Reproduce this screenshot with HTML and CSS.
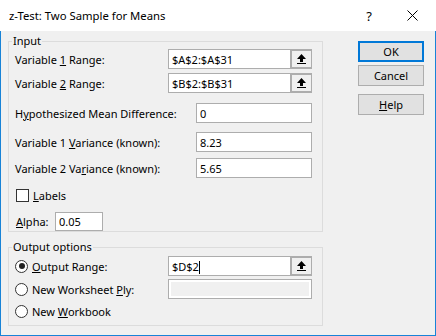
FILE: index.html
```html
<!DOCTYPE html>
<html>

<head>
    <meta content="text/html; charset=utf-8" http-equiv="Content-Type">
    <title>z-Test: Two Sample for Means</title>
    <link rel="stylesheet" href="styles.css">
</head>

<body>
<div class="window">
    <div class="titleBar">
        <span class="titleText">z-Test: Two Sample for Means</span>
        <span class="titleHelp">?</span>
        <svg class="titleClose" width="11" height="11" viewBox="0 0 11 11">
            <path d="M0.5 0.5 L10.5 10.5 M10.5 0.5 L0.5 10.5" stroke="#000" stroke-width="1" fill="none"/>
        </svg>
    </div>
    <div class="client">
        <div class="groups">
            <fieldset class="group groupInput">
                <legend>Input</legend>
                <div class="row">
                    <span class="label">Variable <u>1</u> Range:</span>
                    <div class="edit refEdit">
                        <span class="editText">$A$2:$A$31</span>
                        <span class="refButton">
                            <svg width="9" height="11" viewBox="0 0 9 11"><path d="M4.5 0 L9 5 L6 5 L6 8 L3 8 L3 5 L0 5 Z" fill="#000"/><rect x="0" y="9" width="9" height="1" fill="#000"/></svg>
                        </span>
                    </div>
                </div>
                <div class="row rowRange2">
                    <span class="label">Variable <u>2</u> Range:</span>
                    <div class="edit refEdit">
                        <span class="editText">$B$2:$B$31</span>
                        <span class="refButton">
                            <svg width="9" height="11" viewBox="0 0 9 11"><path d="M4.5 0 L9 5 L6 5 L6 8 L3 8 L3 5 L0 5 Z" fill="#000"/><rect x="0" y="9" width="9" height="1" fill="#000"/></svg>
                        </span>
                    </div>
                </div>
                <div class="row rowHyp">
                    <span class="label">H<u>y</u>pothesized Mean Difference:</span>
                    <div class="edit shortEdit"><span class="editText">0</span></div>
                </div>
                <div class="row rowVar1">
                    <span class="label">Variable 1 <u>V</u>ariance (known):</span>
                    <div class="edit shortEdit"><span class="editText">8.23</span></div>
                </div>
                <div class="row rowVar2">
                    <span class="label">Variable 2 Va<u>r</u>iance (known):</span>
                    <div class="edit shortEdit"><span class="editText">5.65</span></div>
                </div>
                <div class="row rowLabels">
                    <span class="checkBox"></span>
                    <span class="checkLabel"><u>L</u>abels</span>
                </div>
                <div class="row rowAlpha">
                    <span class="alphaLabel"><u>A</u>lpha:</span>
                    <div class="edit alphaEdit"><span class="editText">0.05</span></div>
                </div>
            </fieldset>

            <fieldset class="group groupOutput">
                <legend>Output options</legend>
                <div class="row">
                    <span class="radio checked"></span>
                    <span class="label radioLabel"><u>O</u>utput Range:</span>
                    <div class="edit refEdit">
                        <span class="editText">$D$2<span class="caret"></span></span>
                        <span class="refButton">
                            <svg width="9" height="11" viewBox="0 0 9 11"><path d="M4.5 0 L9 5 L6 5 L6 8 L3 8 L3 5 L0 5 Z" fill="#000"/><rect x="0" y="9" width="9" height="1" fill="#000"/></svg>
                        </span>
                    </div>
                </div>
                <div class="row rowPly">
                    <span class="radio"></span>
                    <span class="label radioLabel">New Worksheet <u>P</u>ly:</span>
                    <div class="edit refEdit disabledEdit"></div>
                </div>
                <div class="row rowBook">
                    <span class="radio"></span>
                    <span class="label radioLabel">New <u>W</u>orkbook</span>
                </div>
            </fieldset>
        </div>

        <div class="buttons">
            <button class="btn btnDefault">OK</button>
            <button class="btn btnCancel">Cancel</button>
            <button class="btn btnHelp"><u>H</u>elp</button>
        </div>
    </div>
</div>
</body>

</html>
```

FILE: styles.css
```css
html, body {
    margin: 0;
    padding: 0;
}

body {
    font-family: "Noto Sans", "Liberation Sans", sans-serif;
    font-size: 11px;
    color: #000;
}

.window {
    width: 436px;
    height: 336px;
    background: #f0f0f0;
}

.titleBar {
    display: flex;
    align-items: center;
    height: 31px;
    background: #fff;
    font-size: 11.3px;
}

.titleText {
    margin-left: 9px;
    flex: 1;
}

.titleHelp {
    font-size: 13px;
    margin-right: 35px;
}

.titleClose {
    margin-right: 18px;
}

.client {
    display: flex;
    height: 305px;
    box-sizing: border-box;
    border-left: 1px solid #1883d7;
    border-right: 1px solid #1883d7;
    border-bottom: 1px solid #1883d7;
    padding-left: 7px;
}

.groups {
    display: flex;
    flex-direction: column;
    padding-top: 3px;
}

.group {
    width: 315px;
    min-width: 0;
    box-sizing: border-box;
    margin: 0;
    border: 1px solid #dcdcdc;
    padding: 1px 10px 0 6px;
}

.group legend {
    line-height: 14px;
    padding: 0 1px;
    margin-left: -3px;
}

.groupOutput {
    margin-top: 8px;
    padding-top: 2px;
    padding-bottom: 4px;
}

.row {
    display: flex;
    align-items: center;
    height: 20px;
}

.rowRange2 { margin-top: 4px; }
.rowHyp { margin-top: 10px; }
.rowVar1 { margin-top: 9px; }
.rowVar2 { margin-top: 6px; }
.rowLabels { margin-top: 7px; }
.rowAlpha { margin-top: 6px; }
.rowPly { margin-top: 3px; }
.rowBook { margin-top: 2px; }

.label {
    flex: 1;
    white-space: nowrap;
}

.edit {
    display: flex;
    align-items: center;
    height: 20px;
    box-sizing: border-box;
    border: 1px solid #adadad;
    background: #fff;
}

.editText {
    flex: 1;
    padding-left: 3px;
    white-space: nowrap;
}

.refEdit {
    width: 144px;
}

.shortEdit {
    width: 116px;
}

.alphaEdit {
    width: 48px;
    height: 19px;
}

.refButton {
    display: flex;
    align-items: center;
    justify-content: center;
    width: 21px;
    height: 18px;
    box-sizing: border-box;
    border: 1px solid #adadad;
    border-left-width: 2px;
    border-right-width: 0;
    background: #f0f0f0;
}

.disabledEdit {
    background: #f0f0f0;
    box-shadow: inset 0 0 0 2px #fff;
}

.caret {
    display: inline-block;
    width: 1px;
    height: 13px;
    background: #000;
    vertical-align: -3px;
}

.checkBox {
    width: 13px;
    height: 13px;
    box-sizing: border-box;
    border: 1px solid #333;
    background: #fff;
    margin-left: 1px;
}

.checkLabel {
    margin-left: 4px;
}

.alphaLabel {
    width: 39px;
    margin-left: 1px;
}

.radio {
    display: flex;
    align-items: center;
    justify-content: center;
    width: 13px;
    height: 13px;
    box-sizing: border-box;
    border: 1px solid #333;
    border-radius: 50%;
    background: #fff;
}

.radio.checked::after {
    content: "";
    width: 6px;
    height: 6px;
    border-radius: 50%;
    background: #222;
}

.radioLabel {
    margin-left: 4px;
}

.buttons {
    display: flex;
    flex-direction: column;
    margin-left: 35px;
    padding-top: 10px;
}

.btn {
    width: 66px;
    height: 21px;
    box-sizing: border-box;
    margin: 0;
    padding: 0;
    border: 1px solid #adadad;
    background: #e1e1e1;
    font-family: "Noto Sans", "Liberation Sans", sans-serif;
    font-size: 11px;
    color: #000;
    line-height: 18px;
}

.btnDefault {
    border: 2px solid #0078d7;
}

.btnCancel {
    margin-top: 3px;
}

.btnHelp {
    margin-top: 8px;
}
```
